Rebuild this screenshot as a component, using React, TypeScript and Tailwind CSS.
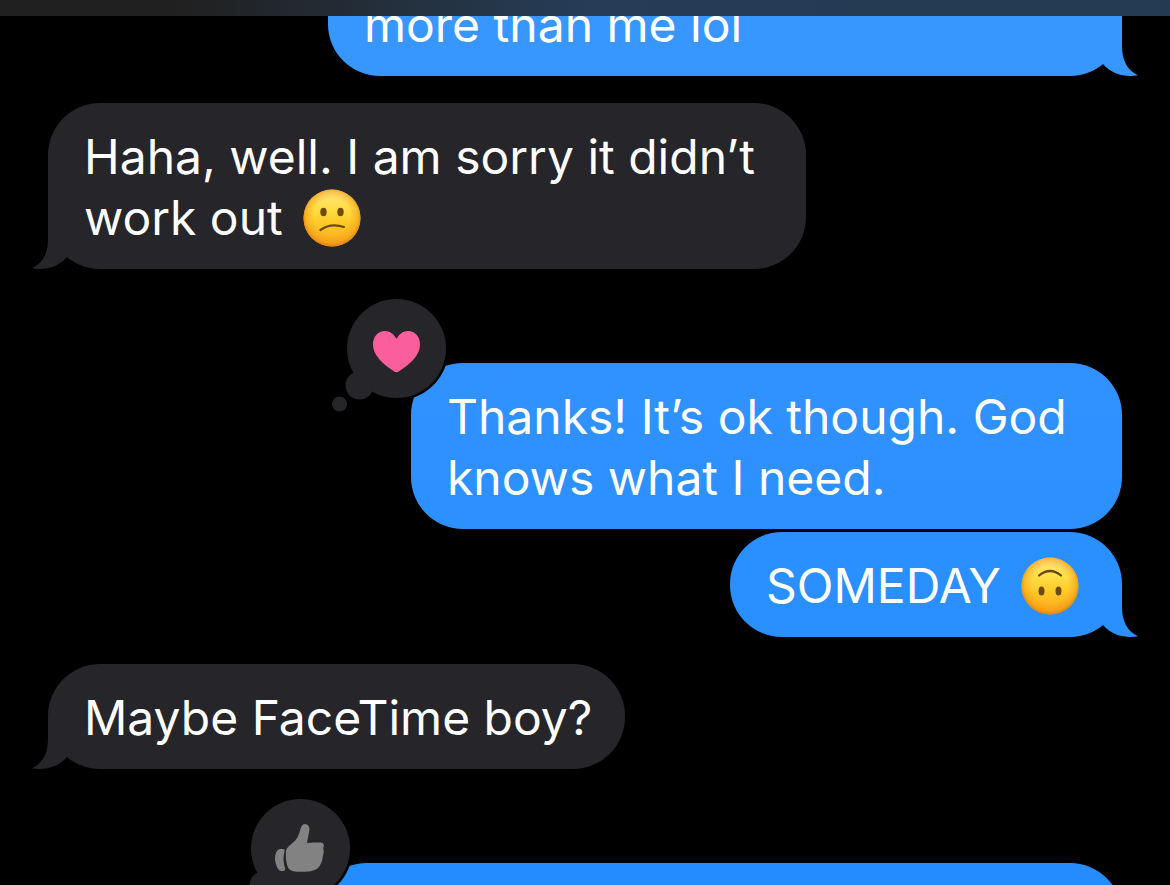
import type { ReactNode } from 'react';

type Reaction = 'heart' | 'like';

type Message = {
  id: number;
  from: 'me' | 'them';
  lines: ReactNode[];
  label: string;
  look: string; // bubble width + colors
  gap: string; // space above the bubble
  tail?: boolean;
  reaction?: Reaction;
};

const Face = ({ flipped = false }: { flipped?: boolean }) => {
  const id = flipped ? 'face-flipped' : 'face-confused';
  return (
    <svg
      viewBox="0 0 58 58"
      className="size-[58px] shrink-0"
      role="img"
      aria-label={flipped ? 'upside-down face' : 'confused face'}
    >
      <defs>
        <linearGradient id={`${id}-fill`} x1="0" y1="0" x2="0" y2="1">
          <stop offset="0" stopColor="#fde58a" />
          <stop offset="0.3" stopColor="#ffe04a" />
          <stop offset="0.6" stopColor="#ffc928" />
          <stop offset="1" stopColor="#fba51c" />
        </linearGradient>
        <radialGradient id={`${id}-edge`} cx="0.5" cy="0.48" r="0.53">
          <stop offset="0.6" stopColor="#f09a14" stopOpacity="0" />
          <stop offset="0.85" stopColor="#f09a14" stopOpacity="0.5" />
          <stop offset="1" stopColor="#d9780b" stopOpacity="0.95" />
        </radialGradient>
      </defs>
      <circle cx="29" cy="29" r="28.5" fill={`url(#${id}-fill)`} />
      <circle cx="29" cy="29" r="28.5" fill={`url(#${id}-edge)`} />
      {flipped ? (
        <>
          <path d="M18 18.5 Q29 9.5 40 18.5" fill="none" stroke="#6b4410" strokeWidth="2.2" strokeLinecap="round" />
          <ellipse cx="20.5" cy="34" rx="3" ry="4.6" fill="#704812" />
          <ellipse cx="37.5" cy="34" rx="3" ry="4.6" fill="#704812" />
        </>
      ) : (
        <>
          <ellipse cx="20.5" cy="23" rx="3.2" ry="4.2" fill="#704812" />
          <ellipse cx="37.5" cy="23" rx="3.2" ry="4.2" fill="#704812" />
          <path d="M17.5 41 Q27.5 33.5 41 38" fill="none" stroke="#704812" strokeWidth="2.2" strokeLinecap="round" />
        </>
      )}
    </svg>
  );
};

const Tapback = ({ kind }: { kind: Reaction }) => (
  <button type="button" aria-label={kind} className="absolute -left-[83px] -top-[67px]">
    <svg viewBox="0 0 122 120" className="block h-[120px] w-[122px]">
      <circle cx="68.5" cy="52.5" r="52" fill="#000" />
      <g fill="#26252a">
        <circle cx="68.5" cy="52.5" r="49.5" />
        <circle cx="31.5" cy="89.5" r="14" />
        <circle cx="11.5" cy="108" r="7.6" />
      </g>
      {kind === 'heart' ? (
        <path
          d="M68.5 43 C66 38 62 35 57 35 C50 35 45 40.5 45 48.5 C45 59 54 67.5 66.3 75.6 Q68.5 77 70.7 75.6 C83 67.5 92 59 92 48.5 C92 40.5 87 35 80 35 C75 35 71 38 68.5 43Z"
          fill="#fb5f9b"
        />
      ) : (
        <g fill="#828282">
          <path d="M72.8 28 C76.2 28 78 31 77.3 34.5 C76.8 38.5 75.6 43 75 47 C79 46.3 85 46.3 89 46.6 C92 47 92.6 49.5 91.2 52 C92 55 91.8 57.5 90.7 60.7 C90.6 64 89.4 67 87.6 70 C85.5 74.5 78 75.8 70 75.8 C63 75.8 57.8 75.5 56 71.5 C54 67 53.6 60 53.9 55 C54.6 51 60 48 63.2 44.5 C66.4 41 67.4 36.5 68.8 32 C69.8 29.2 71 28 72.8 28Z" />
          <path d="M47.5 53 H51.5 Q53.2 53.3 52.4 55.5 C51 61 51.2 67 53 72 Q53.6 75 51.3 75 H49 C45.5 74.5 43 67 43 62 Q43.4 54.5 47.5 53Z" />
        </g>
      )}
    </svg>
  </button>
);

const messages: Message[] = [
  {
    id: 1,
    from: 'me',
    label: 'more than me lol',
    lines: ['more than me lol'],
    look: 'w-[794px] min-h-[166px] bg-[#3897ff] text-[#3897ff]',
    gap: '-mt-[106px]',
    tail: true,
  },
  {
    id: 2,
    from: 'them',
    label: 'Haha, well. I am sorry it didn’t work out',
    lines: ['Haha, well. I am sorry it didn’t', <>work out <Face /></>],
    look: 'w-[758px] bg-[#26252a] text-[#26252a]',
    gap: 'mt-[27px]',
    tail: true,
  },
  {
    id: 3,
    from: 'me',
    label: 'Thanks! It’s ok though. God knows what I need.',
    lines: ['Thanks! It’s ok though. God', 'knows what I need.'],
    look: 'w-[711px] bg-linear-to-b from-[#3192ff] to-[#2c90ff]',
    gap: 'mt-[94px]',
    reaction: 'heart',
  },
  {
    id: 4,
    from: 'me',
    label: 'SOMEDAY',
    lines: [<>SOMEDAY <Face flipped /></>],
    look: 'w-[392px] bg-[#2a8fff] text-[#2a8fff]',
    gap: 'mt-[3px]',
    tail: true,
  },
  {
    id: 5,
    from: 'them',
    label: 'Maybe FaceTime boy?',
    lines: ['Maybe FaceTime boy?'],
    look: 'w-[577px] bg-[#26252a] text-[#26252a]',
    gap: 'mt-[27px]',
    tail: true,
  },
  {
    id: 6,
    from: 'me',
    label: 'Next message',
    lines: [],
    look: 'w-[807px] min-h-[105px] bg-[#248cff]',
    gap: 'mt-[94px]',
    reaction: 'like',
  },
];

const Bubble = ({ message }: { message: Message }) => {
  const mine = message.from === 'me';
  return (
    <li className={`flex ${message.gap} ${mine ? 'justify-end' : 'justify-start'}`}>
      <div
        aria-label={message.label}
        className={`relative flex flex-col justify-end rounded-[52px] pt-[23px] pb-[21px] pl-9 ${message.look}`}
      >
        {message.tail && (
          <svg
            viewBox="0 0 38 52"
            aria-hidden="true"
            className={`absolute bottom-0 h-[52px] w-[38px] ${mine ? '-right-4' : '-left-4 -scale-x-100'}`}
          >
            <path d="M22 0 V22 C22 36 27 46 38 51.3 C26 53.5 12 50.5 3 40 V30 L14 0Z" fill="currentColor" />
          </svg>
        )}
        {message.lines.map((line, i) => (
          <p key={i} className="flex h-[61px] items-center gap-5 whitespace-nowrap text-[48px] leading-[61px] text-white">
            {line}
          </p>
        ))}
        {message.reaction && <Tapback kind={message.reaction} />}
      </div>
    </li>
  );
};

const App = () => {
  return (
    <div className="flex h-screen flex-col overflow-hidden bg-black font-['Inter','Liberation_Sans',sans-serif]">
      {/* bottom edge of the translucent nav bar */}
      <header className="h-4 shrink-0 bg-linear-to-r from-[#202020] via-[#253d57] to-[#243a52] from-15% via-50%" />

      <main className="min-h-0 flex-1 overflow-hidden px-12">
        <ul className="flex flex-col">
          {messages.map(message => (
            <Bubble key={message.id} message={message} />
          ))}
        </ul>
      </main>
    </div>
  );
};

export default App;
